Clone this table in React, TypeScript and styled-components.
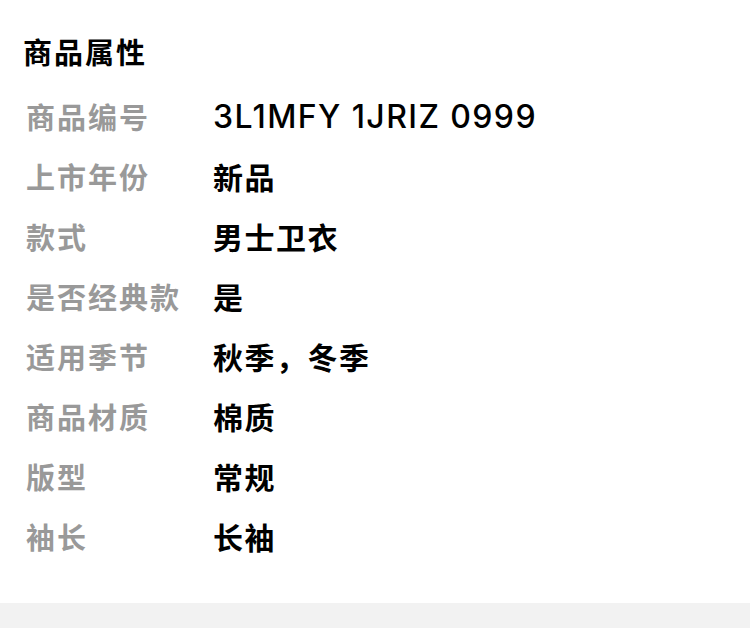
import React from 'react';
import styled, { createGlobalStyle } from 'styled-components';

const GlobalStyle = createGlobalStyle`
  html, body {
    margin: 0;
    padding: 0;
    background: #fff;
    font-family: "Noto Sans CJK SC", "Noto Sans", sans-serif;
  }
`;

const attrs = [
  { label: '商品编号', value: '3L1MFY 1JRIZ 0999', code: true },
  { label: '上市年份', value: '新品' },
  { label: '款式', value: '男士卫衣' },
  { label: '是否经典款', value: '是' },
  { label: '适用季节', value: '秋季，冬季' },
  { label: '商品材质', value: '棉质' },
  { label: '版型', value: '常规' },
  { label: '袖长', value: '长袖' },
];

const App = () => {
  return (
    <>
      <GlobalStyle />
      <Section>
        <Title>商品属性</Title>
        <List>
          {attrs.map((a) => (
            <Row key={a.label}>
              <Label>{a.label}</Label>
              <Value $code={!!a.code}>{a.value}</Value>
            </Row>
          ))}
        </List>
      </Section>
      <Divider />
    </>
  );
};

const Section = styled.div`
  padding: 33px 23px 37px;
  background: #fff;
`;

const Title = styled.h2`
  margin: 0;
  font-size: 29px;
  line-height: 36px;
  letter-spacing: 2px;
  font-weight: 700;
  color: #000;
`;

const List = styled.div`
  margin-top: 17px;
  padding-left: 3px;
`;

const Row = styled.div`
  display: flex;
  align-items: center;
  height: 60px;
`;

const Label = styled.span`
  width: 187px;
  flex-shrink: 0;
  font-size: 29px;
  font-weight: 700;
  letter-spacing: 2px;
  color: #999;
`;

const Value = styled.span<{ $code: boolean }>`
  font-family: "Inter", "Noto Sans CJK SC", sans-serif;
  font-size: ${(p) => (p.$code ? '32px' : '30px')};
  font-weight: ${(p) => (p.$code ? 500 : 600)};
  letter-spacing: ${(p) => (p.$code ? '1.4px' : '1.5px')};
  color: #000;
`;

const Divider = styled.div`
  height: 30px;
  background: #f2f2f2;
`;

export default App;
